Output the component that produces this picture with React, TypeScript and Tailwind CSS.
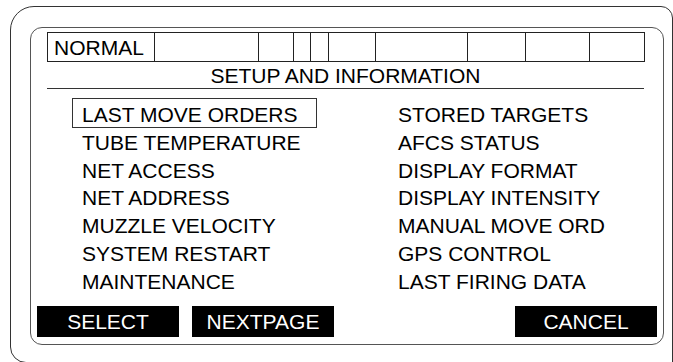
const statusCells = [107, 104, 35, 17, 18, 47, 92, 58, 64, 55];

const leftItems = [
  "LAST MOVE ORDERS",
  "TUBE TEMPERATURE",
  "NET ACCESS",
  "NET ADDRESS",
  "MUZZLE VELOCITY",
  "SYSTEM RESTART",
  "MAINTENANCE",
];

const rightItems = [
  "STORED TARGETS",
  "AFCS STATUS",
  "DISPLAY FORMAT",
  "DISPLAY INTENSITY",
  "MANUAL MOVE ORD",
  "GPS CONTROL",
  "LAST FIRING DATA",
];

function SoftKey({ label }: { label: string }) {
  return (
    <div className="w-[142px] h-[31px] bg-black text-white flex items-center justify-center text-[21px] leading-none">
      {label}
    </div>
  );
}

export default function App() {
  return (
    <div
      className="w-[673px] h-[362px] bg-white overflow-hidden text-black"
      style={{ fontFamily: '"Liberation Sans", Arial, sans-serif' }}
    >
      <div className="pl-[10px] pt-[6px]">
        {/* outer bezel */}
        <div className="w-[663px] h-[357px] border border-[#333] rounded-tl-[24px] rounded-tr-[12px] rounded-bl-[16px] pl-[19px] pt-[20px]">
          {/* screen */}
          <div className="w-[634px] border-[1.5px] border-[#555] rounded-[12px] pt-[4px] pb-[7px]">
            {/* status row */}
            <div className="pl-[16px]">
              <div className="flex h-[30px] w-[598px] border-t border-b border-l border-[#222]">
                {statusCells.map((w, i) => (
                  <div
                    key={i}
                    className="h-full border-r border-[#222] flex items-center pl-[6px] text-[21px] leading-none"
                    style={{ width: w }}
                  >
                    {i === 0 ? "NORMAL" : ""}
                  </div>
                ))}
              </div>
              <div className="mt-[2px] w-[597px] h-[25px] border-b border-[#333] text-center text-[21px] leading-[24px]">
                SETUP AND INFORMATION
              </div>
            </div>

            {/* menu */}
            <div className="mt-[12px] flex text-[21px] leading-[27.75px]">
              <div className="pl-[51px] w-[367px]">
                {leftItems.map((item, i) => (
                  <div key={item} className="relative">
                    {i === 0 && (
                      <span className="absolute left-[-10px] top-[-3px] w-[245px] h-[30px] border border-[#333]" />
                    )}
                    {item}
                  </div>
                ))}
              </div>
              <div>
                {rightItems.map((item) => (
                  <div key={item}>{item}</div>
                ))}
              </div>
            </div>

            {/* soft keys */}
            <div className="mt-[11px] flex pl-[6px] pr-[6px]">
              <SoftKey label="SELECT" />
              <div className="ml-[13px]">
                <SoftKey label="NEXTPAGE" />
              </div>
              <div className="ml-auto">
                <SoftKey label="CANCEL" />
              </div>
            </div>
          </div>
        </div>
      </div>
    </div>
  );
}
